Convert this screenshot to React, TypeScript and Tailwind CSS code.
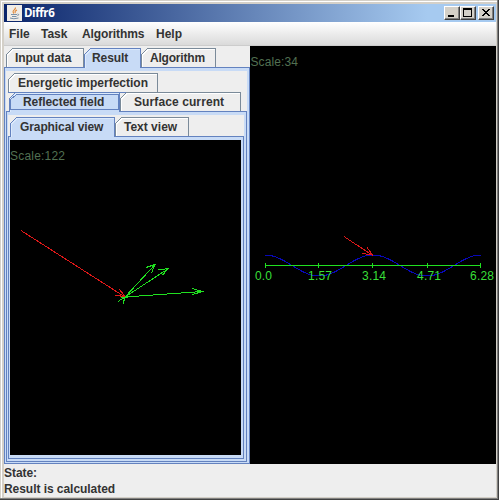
import React from "react";

type TabProps = {
  label: string;
  width: string;
  w: number;
  pad: string;
  selected?: boolean;
  closed?: boolean;
};

function Tab({ label, width, w, pad, selected, closed }: TabProps) {
  const line = selected ? "#6382bf" : "#7a8a99";
  return (
    <div className={`grid h-[20px] shrink-0 ${width}`}>
      <svg className="col-start-1 row-start-1" width={w} height="20" shapeRendering="crispEdges">
        <path d={`M0.5 20V6.5L6.5 0.5H${w - 0.5}V20Z`} fill={selected ? "#c8dbf6" : "#eeeeee"} />
        <path d={`M1.5 20V7L7 1.5H${w - 1}`} fill="none" stroke={selected ? "#dceafc" : "#ffffff"} />
        <path d={`M0.5 20V6.5L6.5 0.5H${w - 0.5}V20`} fill="none" stroke={line} />
        {!selected && <path d={`M0 19.5H${w}`} stroke="#6382bf" />}
        {closed && (
          <path d={`M1.500 17.500V7.500L7.500 2.500H${w - 1.5}V17.500Z`} fill="none" stroke="#6382bf" />
        )}
      </svg>
      <span className={`z-10 col-start-1 row-start-1 whitespace-nowrap leading-[20px] ${pad}`}>{label}</span>
    </div>
  );
}

function JavaIcon() {
  return (
    <svg className="ml-[3px] mt-px shrink-0" width="15" height="16" viewBox="0 0 15 16">
      <rect width="15" height="16" fill="#f0ece6" />
      <path d="M8.500 2.500C9 5 4 5.500 7 8.500M10 5C8 6 7.500 7 8.500 8" fill="none" stroke="#e08a3c" strokeWidth="1.1" />
      <path d="M4 9.500H10M5 11.500H9.500M10.500 9Q13 9 10.500 11M3 13Q6.500 14.500 11.500 13" fill="none" stroke="#7890a8" />
    </svg>
  );
}

function WindowButton({ children, className = "" }: { children: React.ReactNode; className?: string }) {
  return (
    <div
      className={`h-[14px] w-[16px] shrink-0 border border-b-[#404040] border-l-white border-r-[#404040] border-t-white bg-[#d4d0c8] shadow-[inset_-1px_-1px_#808080] ${className}`}
    >
      <svg width="14" height="12" shapeRendering="crispEdges" className="block">
        {children}
      </svg>
    </div>
  );
}

function FieldPlot() {
  return (
    <svg width="231" height="315" className="block bg-black" shapeRendering="crispEdges" fill="none">
      <text x="0" y="20" fontSize="12" fill="#527052" textLength="55">Scale:122</text>
      <path d="M11 90.500L115 157M109.500 149.500L115.500 157L105.500 155" stroke="#e01818" />
      <path d="M115 157L145 124.500M136 127.500L145 124.500L141.500 133M115 157L158.500 128.500M148 130L158.500 128.500L152.500 135M115 157L192.500 151.500M182 148.500L192.500 151.500L182.500 154.500M108 161.500L115 157L113 164M111 157H118" stroke="#20e020" />
    </svg>
  );
}

function SurfacePlot() {
  const wave = Array.from({ length: 109 }, (_, i) => {
    const x = i * 2;
    return `${i ? "L" : "M"}${x + 15} ${219.5 - 10.5 * Math.cos((x / 108) * Math.PI * 2)}`;
  }).join("");
  const labels: [string, number, number][] = [
    ["0.0", 5, 17], ["1.57", 58, 24], ["3.14", 112, 24], ["4.71", 167, 24], ["6.28", 220, 24],
  ];
  return (
    <svg width="246" height="418" className="block shrink-0 bg-black" fill="none" shapeRendering="crispEdges">
      <text x="0.5" y="20" fontSize="12" fill="#527052" textLength="47.5">Scale:34</text>
      <path d={wave} stroke="#0808b8" />
      <path d="M15 219.500H231M15.500 217V222M68.500 217V222M122.500 217V222M177.500 217V222M230.500 217V222" stroke="#20e020" />
      <path d="M94 190.500L122 209M117 201.500L122.500 209L112 207.500" stroke="#e01818" />
      {labels.map(([t, x, len]) => (
        <text key={t} x={x} y="234" fontSize="12" fill="#38df38" textLength={len}>{t}</text>
      ))}
    </svg>
  );
}

export default function App() {
  return (
    <div className="flex h-[500px] w-[499px] flex-col border-b border-r border-[#404040] bg-[#d4d0c8] font-['Liberation_Sans',Arial,sans-serif] text-[12px] font-bold text-[#333333]">
      <div className="flex grow flex-col border-b border-r border-[#808080]">
        <div className="ml-px mt-px flex grow flex-col border-l border-t border-white pl-[2px] pr-px pt-[2px]">
          <div className="flex h-[18px] w-[492px] bg-[linear-gradient(90deg,#0a246a,#a6caf0_86%)]">
            <JavaIcon />
            <span className="ml-[2px] font-['Open_Sans','Noto_Sans',sans-serif] text-[11.5px] leading-[18px] tracking-[-0.4px] text-white">Diffr6</span>
            <WindowButton className="ml-auto mt-[2px]">
              <path d="M3 9H9" stroke="#000" strokeWidth="2" />
            </WindowButton>
            <WindowButton className="mt-[2px]">
              <path d="M2.500 2V9.500H10.500V2M2 2H11" fill="none" stroke="#000" />
              <path d="M2 2H11" stroke="#000" strokeWidth="2" />
            </WindowButton>
            <WindowButton className="ml-[2px] mr-[2px] mt-[2px]">
              <path d="M3 2L10 9M4 2L11 9M10 2L3 9M11 2L4 9" stroke="#000" />
            </WindowButton>
          </div>
          <nav className="flex h-[24px] w-[492px] border-b border-[#cccccc] bg-linear-to-b from-white to-[#dadada] leading-[25px]">
            <span className="ml-[5px] w-[32px]">File</span>
            <span className="w-[41px]">Task</span>
            <span className="w-[74px] tracking-[-0.1px]">Algorithms</span>
            <span>Help</span>
          </nav>
          <main className="flex h-[418px] w-[492px] bg-[#eeeeee]">
            <section className="flex w-[246px] flex-col pt-[2px]">
              <div className="z-10 flex h-[20px] pl-[2px]">
                <Tab label="Input data" width="w-[78px]" w={78} pad="pl-[9px] tracking-[-0.1px]" />
                <Tab label="Result" width="w-[57px]" w={57} pad="pl-[8px] tracking-[-0.1px]" selected />
                <Tab label="Algorithm" width="w-[75px]" w={75} pad="pl-[9px] tracking-[-0.2px]" />
              </div>
              <div className="-mt-px flex h-[397px] flex-col border border-[#6382bf] bg-[#c8dbf6] pb-[2px] pl-px pr-[2px] pt-[3px]">
                <div className="flex h-[40px] flex-col bg-[#eeeeee] pt-[2px]">
                  <div className="flex h-[19px] pl-[2px]">
                    <Tab label="Energetic imperfection" width="w-[150px]" w={150} pad="pl-[10px]" />
                  </div>
                  <div className="z-10 flex h-[20px] pl-[3px]">
                    <Tab label="Reflected field" width="w-[111px]" w={111} pad="pl-[14px] tracking-[-0.05px]" selected closed />
                    <Tab label="Surface current" width="w-[121px]" w={121} pad="pl-[14px] tracking-[0.1px]" />
                  </div>
                </div>
                <div className="flex h-[351px] flex-col border border-[#6382bf] bg-[#c8dbf6] pb-[2px] pl-px pr-[2px] pt-[3px]">
                  <div className="z-10 h-[21px] bg-[#eeeeee] pl-[2px] pt-[2px]">
                    <div className="flex h-[20px]">
                      <Tab label="Graphical view" width="w-[105px]" w={105} pad="pl-[10px] tracking-[-0.1px]" selected />
                      <Tab label="Text view" width="w-[74px]" w={74} pad="pl-[9px]" />
                    </div>
                  </div>
                  <div className="flex h-[323px] flex-col border border-[#6382bf] bg-[#c8dbf6] pl-px pr-px pt-[3px] font-normal">
                    <FieldPlot />
                  </div>
                </div>
              </div>
            </section>
            <section className="font-normal">
              <SurfacePlot />
            </section>
          </main>
          <footer className="h-[33px] w-[492px] bg-[#eeeeee] pt-px leading-[16px] tracking-[-0.05px]">
            <p>State:</p>
            <p>Result is calculated</p>
          </footer>
        </div>
      </div>
    </div>
  );
}
